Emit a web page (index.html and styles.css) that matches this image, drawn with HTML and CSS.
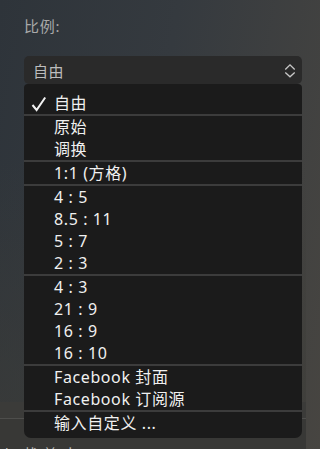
FILE: index.html
```html
<!DOCTYPE html>
<html lang="zh-CN">
<head>
<meta charset="utf-8">
<link rel="stylesheet" href="styles.css">
</head>
<body>
<div class="panel">
  <div class="label">比例:</div>
  <div class="dropdown">
    <div class="select">
      <span class="select-text">自由</span>
      <svg class="chev" width="12" height="16" viewBox="0 0 12 16">
        <polyline points="1.3,6.5 6,1.8 10.7,6.5" fill="none" stroke="#c8c8c8" stroke-width="1.3"/>
        <polyline points="1.3,9.5 6,13.8 10.7,9.5" fill="none" stroke="#c8c8c8" stroke-width="1.3"/>
      </svg>
    </div>
    <div class="menu">
      <div class="item">
        <svg class="check" width="16" height="16" viewBox="0 0 16 16">
          <polyline points="1.5,9 5.6,14 14.2,1.5" fill="none" stroke="#f2f2f2" stroke-width="2"/>
        </svg>
        <span class="txt">自由</span>
      </div>
      <div class="sep"></div>
      <div class="item"><span class="txt">原始</span></div>
      <div class="item"><span class="txt">调换</span></div>
      <div class="sep"></div>
      <div class="item"><span class="txt">1:1 (方格)</span></div>
      <div class="sep"></div>
      <div class="item"><span class="txt">4 : 5</span></div>
      <div class="item"><span class="txt">8.5 : 11</span></div>
      <div class="item"><span class="txt">5 : 7</span></div>
      <div class="item"><span class="txt">2 : 3</span></div>
      <div class="sep"></div>
      <div class="item"><span class="txt">4 : 3</span></div>
      <div class="item"><span class="txt">21 : 9</span></div>
      <div class="item"><span class="txt">16 : 9</span></div>
      <div class="item"><span class="txt">16 : 10</span></div>
      <div class="sep"></div>
      <div class="item"><span class="txt">Facebook 封面</span></div>
      <div class="item"><span class="txt">Facebook 订阅源</span></div>
      <div class="sep"></div>
      <div class="item"><span class="txt">输入自定义 ...</span></div>
    </div>
  </div>
</div>
<div class="band"></div>
<div class="footer"><span class="footer-text">以 裁剪本</span></div>
</body>
</html>
```
FILE: styles.css
```css
html, body {
  margin: 0;
  padding: 0;
}
body {
  width: 306px;
  height: 449px;
  overflow: hidden;
  background: linear-gradient(100deg, #2e343a 0%, #353a3f 45%, #474541 100%);
  font-family: "Noto Sans", "Noto Sans CJK SC", sans-serif;
}
.panel {
  box-sizing: border-box;
  height: 402px;
  padding: 16px 4px 0 24px;
  background: linear-gradient(180deg, rgba(0,0,0,0) 0%, rgba(0,0,0,0) 40%, rgba(60,60,56,0.6) 100%);
}
.label {
  font-size: 15px;
  line-height: 20px;
  color: #a9a9a9;
  letter-spacing: 0.8px;
}
.dropdown {
  position: relative;
  margin-top: 20px;
}
.select {
  height: 28px;
  box-sizing: border-box;
  background: #2a2a2a;
  border-radius: 5px;
  display: flex;
  align-items: center;
  justify-content: space-between;
  padding: 0 6px 0 9px;
}
.select-text {
  font-size: 15px;
  color: #bdbdbd;
  letter-spacing: 0.5px;
}
.chev {
  display: block;
  margin-top: 1px;
}
.menu {
  position: absolute;
  top: 28px;
  left: 0;
  right: 0;
  background: #1b1b1b;
  border-radius: 4px 4px 7px 7px;
  padding: 8px 0 4px 0;
  z-index: 2;
}
.item {
  height: 22px;
  display: flex;
  align-items: center;
  padding-left: 30px;
  position: relative;
}
.txt {
  font-size: 16px;
  line-height: 22px;
  color: #f0f0f0;
  letter-spacing: 0.6px;
  white-space: nowrap;
}
.check {
  position: absolute;
  left: 7px;
  top: 4px;
}
.sep {
  height: 2px;
  background: #3c3c3c;
}
.band {
  height: 16px;
  background: #3b3b39;
  border-bottom: 1px solid #4e4e4c;
}
.footer {
  background: #383836;
  height: 30px;
  overflow: hidden;
  box-sizing: border-box;
  padding-top: 26px;
  margin-left: -6px;
}
.footer-text {
  display: block;
  font-size: 16px;
  line-height: 20px;
  color: #b8b8b8;
  letter-spacing: 4px;
  white-space: nowrap;
}
```
